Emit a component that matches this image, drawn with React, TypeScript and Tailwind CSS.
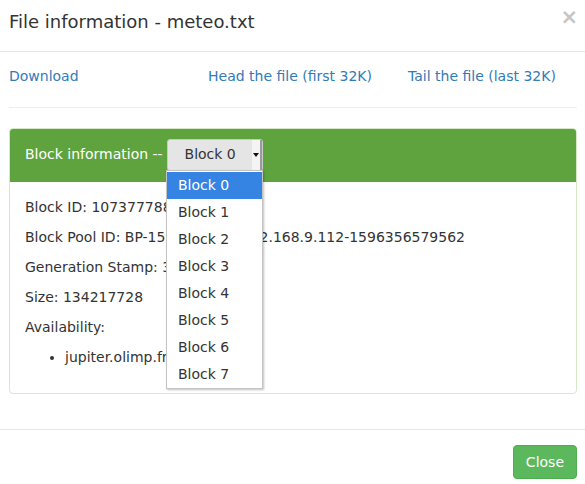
export default function App() {
  const blocks = ["Block 0", "Block 1", "Block 2", "Block 3", "Block 4", "Block 5", "Block 6", "Block 7"];
  return (
    <div
      className="w-[585px] h-[484px] bg-white text-[14px] text-[#333] overflow-hidden"
      style={{ fontFamily: '"DejaVu Sans", sans-serif' }}
    >
      {/* header */}
      <div className="h-[52px] border-b border-[#e5e5e5] flex items-center justify-between pl-[9px] pr-[7px]">
        <h4 className="text-[18px] leading-[20px] text-[#333] -mt-[7px]">File information - meteo.txt</h4>
        <span className="text-[#c6c6c6] text-[21px] font-bold leading-none -mt-[17px]">×</span>
      </div>

      {/* body */}
      <div className="px-[9px] pt-[14px]">
        <div className="flex h-[20px] leading-[20px] text-[#337ab7]">
          <a className="w-[199px]">Download</a>
          <a className="w-[200px]">Head the file (first 32K)</a>
          <a>Tail the file (last 32K)</a>
        </div>
        <div className="mt-[21px] border-t border-[#eee] mr-[-1px]"></div>

        <div className="mt-[20px] w-[568px] rounded-[4px] border border-[#d6e9c6]">
          <div className="h-[53px] bg-[#5fa33e] rounded-t-[3px] flex items-center pl-[15px] text-white relative">
            <span className="-mt-[2px]">Block information --</span>
            <div className="ml-[4px] mt-[-2px] w-[96px] h-[32px] rounded-[3px] bg-[#e5e5e5] border border-[#c8c8c8] flex items-stretch text-[#333]">
              <div className="flex-1 flex items-center justify-center pl-[1px]">Block 0</div>
              <div className="w-[10px] bg-[#f4f4f4] border-r-[2px] border-[#9a9a9a] flex items-center justify-center">
                <svg width="6" height="4" viewBox="0 0 6 4">
                  <path d="M0 0 L6 0 L3 4 Z" fill="#111" />
                </svg>
              </div>
            </div>
            <ul className="absolute left-[156px] top-[41px] w-[97px] pt-[1px] bg-white border border-[#c4c4c4] shadow-[1px_1px_2px_rgba(0,0,0,0.25)] z-10 text-[#333]">
              {blocks.map((b, i) => (
                <li
                  key={b}
                  className={
                    "h-[27px] flex items-center pl-[11px] " +
                    (i === 0 ? "bg-[#3584e4] text-white" : "")
                  }
                >
                  {b}
                </li>
              ))}
            </ul>
          </div>
          <div className="px-[15px] pt-[15px] pb-[16px] leading-[20px]">
            <p className="mb-[10px]">Block ID: 1073777889</p>
            <p className="mb-[10px]">Block Pool ID: BP-1596356579-192.168.9.112-1596356579562</p>
            <p className="mb-[10px]">Generation Stamp: 37065</p>
            <p className="mb-[10px]">Size: 134217728</p>
            <p className="mb-[10px]">Availability:</p>
            <ul className="pl-[40px] list-disc mb-[10px]">
              <li>jupiter.olimp.fr</li>
            </ul>
          </div>
        </div>
      </div>

      {/* footer */}
      <div className="mt-[35px] border-t border-[#e5e5e5] flex justify-end pt-[15px] pr-[8px]">
        <button className="h-[34px] px-[12px] rounded-[4px] bg-[#5cb85c] border border-[#4cae4c] text-white text-[14px]">
          Close
        </button>
      </div>
    </div>
  );
}
